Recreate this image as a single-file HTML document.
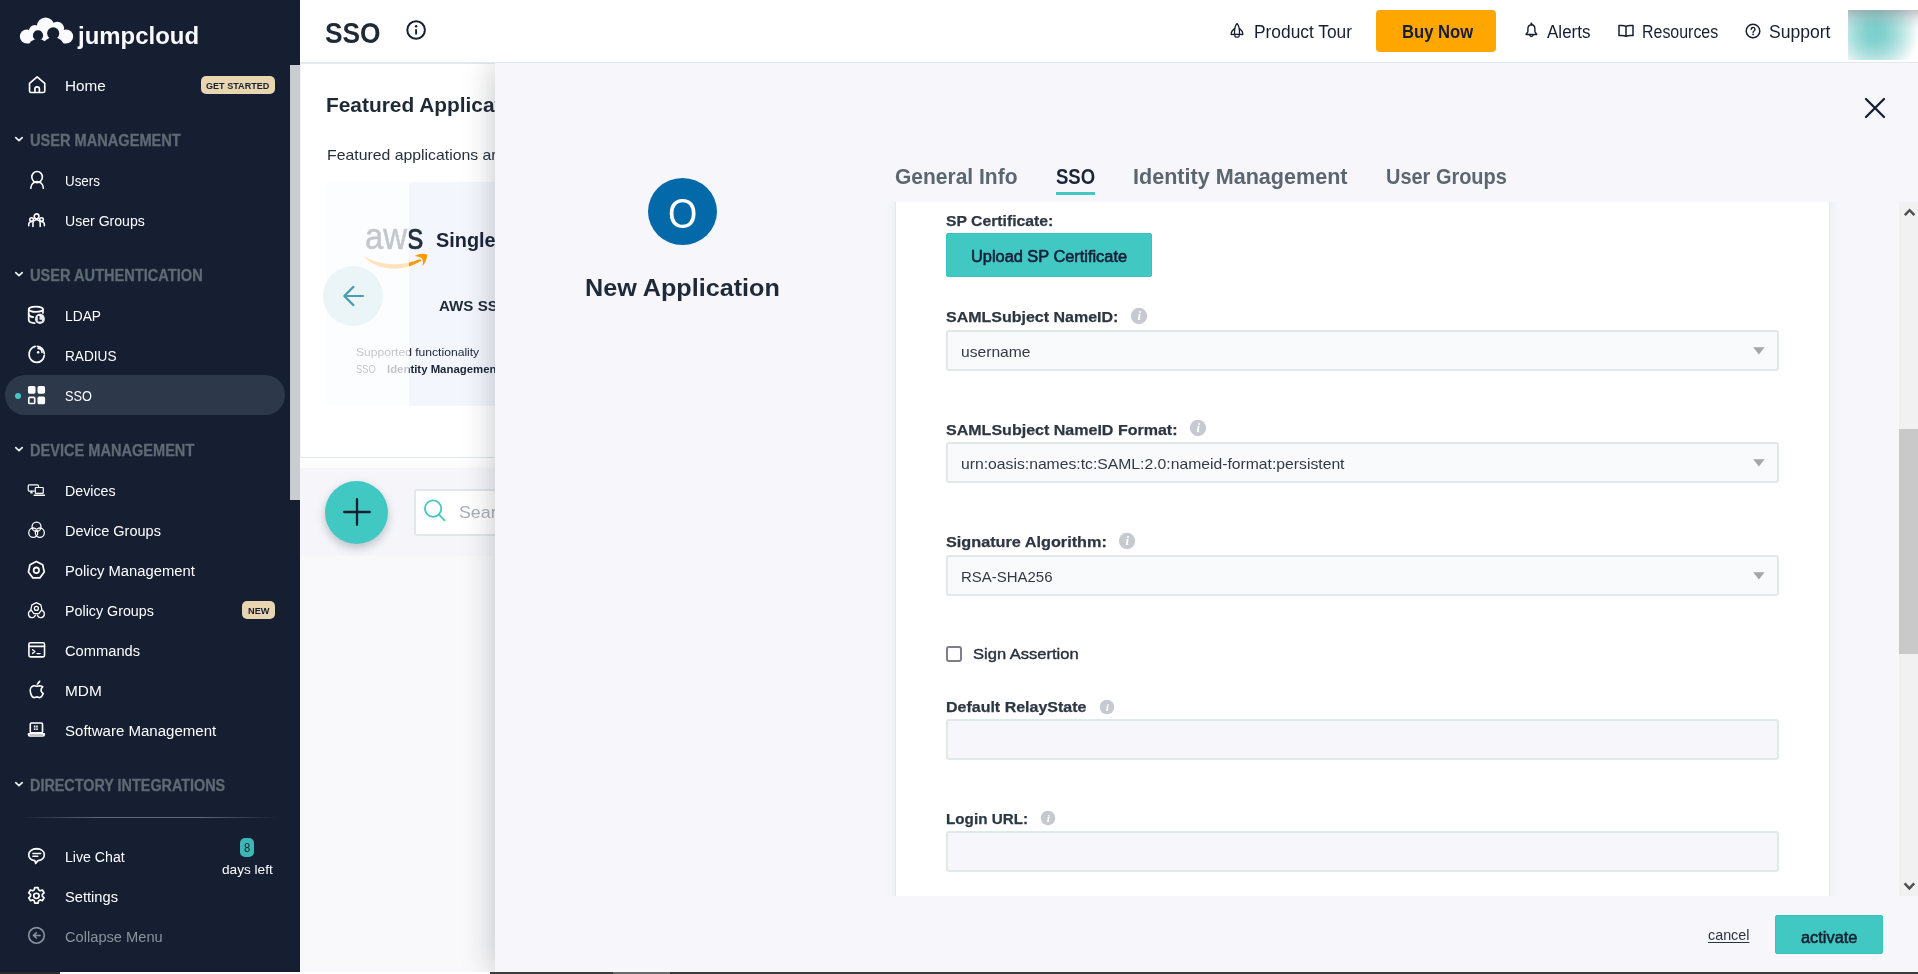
<!DOCTYPE html>
<html><head><meta charset="utf-8"><title>SSO - JumpCloud</title>
<style>
html,body{margin:0;padding:0;}
body{width:1918px;height:974px;overflow:hidden;position:relative;background:#f9f9fb;font-family:"Liberation Sans",sans-serif;}
#root{position:absolute;left:0;top:0;width:1918px;height:974px;will-change:transform;}
.b{position:absolute;display:block;}
.t{position:absolute;white-space:nowrap;display:block;transform-origin:0 0;}
</style></head><body><div id="root">
<div class="b" style="left:0px;top:0px;width:300px;height:972px;background:#161e32;"></div>
<div class="b" style="left:290px;top:65px;width:10px;height:435px;background:#c9cdd0;"></div>
<svg class="b" style="left:14px;top:12px" width="70" height="38" viewBox="14 12 70 38">
<g fill="#fafbfd">
<circle cx="26.9" cy="36.6" r="7.05"/><circle cx="66.1" cy="36.6" r="7.05"/>
<circle cx="45.6" cy="26.1" r="8.7"/><circle cx="34.9" cy="30.9" r="6"/><circle cx="57.3" cy="28.5" r="6.8"/>
<rect x="27" y="30" width="39" height="13.6"/>
</g>
<g fill="#161e32">
<circle cx="38" cy="35.4" r="5.1"/><circle cx="53.2" cy="33.2" r="6.05"/>
<ellipse cx="38" cy="47" rx="9.5" ry="8"/><ellipse cx="53.4" cy="46.500" rx="10.600" ry="9.200"/>
<rect x="14" y="43.65" width="70" height="7"/>
</g>
</svg>
<span class="t" style="left:78.38px;top:19.60px;font-size:24px;line-height:31px;font-weight:700;color:#fafbfd;transform:scaleX(0.9975);">jumpcloud</span>
<div class="b" style="left:5px;top:375px;width:280px;height:40px;background:#2d384b;border-radius:20px;"></div>
<div class="b" style="left:15px;top:393px;width:6px;height:6px;background:#41c8c3;border-radius:50%;"></div>
<span class="t" style="left:65.10px;top:75.50px;font-size:15.5px;line-height:20px;font-weight:400;color:#fff;transform:scaleX(0.9859);">Home</span>
<span class="t" style="left:29.90px;top:130.00px;font-size:16.0px;line-height:21px;font-weight:700;color:#5e6a74;transform:scaleX(0.9119);-webkit-text-stroke:0.300px #5e6a74;">USER MANAGEMENT</span><svg class="b" style="left:14px;top:134px" width="10" height="10" viewBox="0 0 10 10"><path d="M1.8 3.6 L5 6.6 L8.2 3.6" fill="none" stroke="#e8ecf0" stroke-width="1.8" stroke-linecap="round" stroke-linejoin="round"/></svg>
<span class="t" style="left:65.10px;top:170.50px;font-size:15.5px;line-height:20px;font-weight:400;color:#fff;transform:scaleX(0.8627);">Users</span>
<span class="t" style="left:65.10px;top:210.50px;font-size:15.5px;line-height:20px;font-weight:400;color:#fff;transform:scaleX(0.9080);">User Groups</span>
<span class="t" style="left:29.90px;top:265.00px;font-size:16.0px;line-height:21px;font-weight:700;color:#5e6a74;transform:scaleX(0.9120);-webkit-text-stroke:0.300px #5e6a74;">USER AUTHENTICATION</span><svg class="b" style="left:14px;top:269px" width="10" height="10" viewBox="0 0 10 10"><path d="M1.8 3.6 L5 6.6 L8.2 3.6" fill="none" stroke="#e8ecf0" stroke-width="1.8" stroke-linecap="round" stroke-linejoin="round"/></svg>
<span class="t" style="left:65.10px;top:305.50px;font-size:15.5px;line-height:20px;font-weight:400;color:#fff;transform:scaleX(0.8899);">LDAP</span>
<span class="t" style="left:65.10px;top:345.50px;font-size:15.5px;line-height:20px;font-weight:400;color:#fff;transform:scaleX(0.8807);">RADIUS</span>
<span class="t" style="left:65.10px;top:385.50px;font-size:15.5px;line-height:20px;font-weight:400;color:#fff;transform:scaleX(0.8225);">SSO</span>
<span class="t" style="left:29.90px;top:440.00px;font-size:16.0px;line-height:21px;font-weight:700;color:#5e6a74;transform:scaleX(0.9104);-webkit-text-stroke:0.300px #5e6a74;">DEVICE MANAGEMENT</span><svg class="b" style="left:14px;top:444px" width="10" height="10" viewBox="0 0 10 10"><path d="M1.8 3.6 L5 6.6 L8.2 3.6" fill="none" stroke="#e8ecf0" stroke-width="1.8" stroke-linecap="round" stroke-linejoin="round"/></svg>
<span class="t" style="left:65.10px;top:480.50px;font-size:15.5px;line-height:20px;font-weight:400;color:#fff;transform:scaleX(0.9183);">Devices</span>
<span class="t" style="left:65.10px;top:520.50px;font-size:15.5px;line-height:20px;font-weight:400;color:#fff;transform:scaleX(0.9353);">Device Groups</span>
<span class="t" style="left:65.10px;top:560.50px;font-size:15.5px;line-height:20px;font-weight:400;color:#fff;transform:scaleX(0.9532);">Policy Management</span>
<span class="t" style="left:65.10px;top:600.50px;font-size:15.5px;line-height:20px;font-weight:400;color:#fff;transform:scaleX(0.9214);">Policy Groups</span>
<span class="t" style="left:65.10px;top:640.50px;font-size:15.5px;line-height:20px;font-weight:400;color:#fff;transform:scaleX(0.9472);">Commands</span>
<span class="t" style="left:65.10px;top:680.50px;font-size:15.5px;line-height:20px;font-weight:400;color:#fff;transform:scaleX(0.9934);">MDM</span>
<span class="t" style="left:65.10px;top:720.50px;font-size:15.5px;line-height:20px;font-weight:400;color:#fff;transform:scaleX(0.9697);">Software Management</span>
<span class="t" style="left:29.90px;top:775.00px;font-size:16.0px;line-height:21px;font-weight:700;color:#5e6a74;transform:scaleX(0.8987);-webkit-text-stroke:0.300px #5e6a74;">DIRECTORY INTEGRATIONS</span><svg class="b" style="left:14px;top:779px" width="10" height="10" viewBox="0 0 10 10"><path d="M1.8 3.6 L5 6.6 L8.2 3.6" fill="none" stroke="#e8ecf0" stroke-width="1.8" stroke-linecap="round" stroke-linejoin="round"/></svg>
<div class="b" style="left:20px;top:817px;width:259px;height:1px;background:linear-gradient(90deg,rgba(120,130,145,0),rgba(120,130,145,.75) 30%,rgba(120,130,145,.75) 70%,rgba(120,130,145,0));"></div>
<span class="t" style="left:65.10px;top:846.50px;font-size:15.5px;line-height:20px;font-weight:400;color:#fff;transform:scaleX(0.9116);">Live Chat</span>
<span class="t" style="left:65.10px;top:886.50px;font-size:15.5px;line-height:20px;font-weight:400;color:#fff;transform:scaleX(0.9459);">Settings</span>
<span class="t" style="left:65.10px;top:926.50px;font-size:15.5px;line-height:20px;font-weight:400;color:#8a929c;transform:scaleX(0.9450);">Collapse Menu</span>
<div class="b" style="left:201px;top:76px;width:74px;height:18px;background:#e8d6b0;border-radius:5px;"></div>
<span class="t" style="left:206.30px;top:80.30px;font-size:9.5px;line-height:12px;font-weight:700;color:#161e32;transform:scaleX(0.9546);">GET STARTED</span>
<div class="b" style="left:242px;top:601px;width:33px;height:18px;background:#e8d6b0;border-radius:5px;"></div>
<span class="t" style="left:247.80px;top:605.30px;font-size:9.5px;line-height:12px;font-weight:700;color:#161e32;transform:scaleX(0.9692);">NEW</span>
<div class="b" style="left:240px;top:838px;width:14px;height:19px;background:#3cb8b4;border-radius:5px;"></div>
<span class="t" style="left:244.00px;top:840.30px;font-size:12.0px;line-height:16px;font-weight:400;color:#161e32;transform:scaleX(0.9309);">8</span>
<span class="t" style="left:221.80px;top:860.90px;font-size:13.0px;line-height:17px;font-weight:400;color:#fff;transform:scaleX(1.0490);">days left</span>
<svg class="b" style="left:22px;top:71px" width="28" height="28" viewBox="-4 -4 28 28" fill="none" stroke="#fff" stroke-width="1.65" stroke-linecap="round" stroke-linejoin="round"><g transform="matrix(1.0155 0 0 0.9782 0.489 -0.065)"><path d="M3 8.6 L10.5 2 L18 8.6 V16.4 a1.6 1.6 0 0 1 -1.6 1.6 H4.6 a1.6 1.6 0 0 1 -1.6 -1.6 Z"/><path d="M8.3 17.8 v-3.4 a2.2 2.2 0 0 1 4.4 0 v3.4"/></g></svg>
<svg class="b" style="left:22px;top:166px" width="28" height="28" viewBox="-4 -4 28 28" fill="none" stroke="#fff" stroke-width="1.65" stroke-linecap="round" stroke-linejoin="round"><g transform="matrix(0.9775 0 0 1.0257 0.736 -0.326)"><circle cx="10.6" cy="7.2" r="5.4"/><path d="M4.2 18 a6.4 6.4 0 0 1 12.8 0"/></g></svg>
<svg class="b" style="left:22px;top:206px" width="28" height="28" viewBox="-4 -4 28 28" fill="none" stroke="#fff" stroke-width="1.65" stroke-linecap="round" stroke-linejoin="round"><g transform="matrix(0.9525 0 0 0.9712 0.657 0.087)"><circle cx="10.4" cy="6.4" r="2.5"/><path d="M6.6 16.8 v-3 a3.8 3.8 0 0 1 7.6 0 v3"/><circle cx="5.2" cy="9.8" r="1.9"/><path d="M2.2 16.2 v-1.6 a3 3 0 0 1 3.6 -2.9"/><circle cx="15.6" cy="9.8" r="1.9"/><path d="M18.6 16.2 v-1.6 a3 3 0 0 0 -3.6 -2.9"/></g></svg>
<svg class="b" style="left:22px;top:301px" width="28" height="28" viewBox="-4 -4 28 28" fill="none" stroke="#fff" stroke-width="1.7" stroke-linecap="round" stroke-linejoin="round"><g transform="matrix(1.0041 0 0 1.0382 -0.108 -0.238)"><ellipse cx="9.9" cy="4.3" rx="7.1" ry="2.6"/><path d="M2.8 4.3 V14.5 c0 1.700 2.600 3 6 3.200"/><path d="M17 4.300 V8"/><path d="M2.800 9.400 c0.300 1.300 2 2.200 4.600 2.600"/><circle cx="14" cy="13.600" r="4.900" fill="#eceef1" stroke="none"/><path d="M12.700 10.800 V15.200 H15.900" stroke="#161e32" stroke-width="1.700" stroke-linecap="butt" stroke-linejoin="miter"/></g></svg>
<svg class="b" style="left:22px;top:341px" width="28" height="28" viewBox="-4 -4 28 28" fill="none" stroke="#fff" stroke-width="1.7" stroke-linecap="round" stroke-linejoin="round"><g transform="matrix(0.9949 0 0 1.0518 0.210 -1.078)"><path d="M9 2.350 A7.700 7.700 0 1 0 18.200 10.900"/><path d="M11.300 2.250 A7.700 7.700 0 0 1 18.200 9.100"/><path d="M12 4.100 A3.900 3.900 0 0 1 15.900 8"/><circle cx="12" cy="8" r="1.250" fill="#fff" stroke="none"/></g></svg>
<svg class="b" style="left:22px;top:381px" width="28" height="28" viewBox="-4 -4 28 28" fill="none" stroke="#fff" stroke-width="1.65" stroke-linecap="round" stroke-linejoin="round"><g transform="matrix(1.0251 0 0 1.0471 0.312 0.153)"><rect x="1.6" y="0.8" width="7.4" height="7.4" rx="1.6" fill="#fff" stroke="none"/><rect x="10.9" y="0.8" width="7.4" height="7.4" rx="1.6" fill="#fff" stroke="none"/><rect x="10.9" y="10.9" width="7.4" height="7.4" rx="1.6" fill="#fff" stroke="none"/><rect x="2.4" y="11.7" width="5.8" height="5.8" rx="1" stroke-width="1.6"/></g></svg>
<svg class="b" style="left:22px;top:476px" width="28" height="28" viewBox="-4 -4 28 28" fill="none" stroke="#fff" stroke-width="1.65" stroke-linecap="round" stroke-linejoin="round"><g transform="matrix(0.9898 0 0 0.9950 -0.180 0.520)"><path d="M8.6 10.6 H3.4 a1 1 0 0 1 -1 -1 V5.4 a1 1 0 0 1 1 -1 h8.4 a1 1 0 0 1 1 1 v0.8" stroke-width="1.2"/><path d="M5.6 10.8 l-0.6 1.6 h1.6" stroke-width="1.2"/><rect x="9.6" y="7" width="8" height="6" rx="0.6" stroke-width="1.2"/><path d="M8.4 14.8 h10.4" stroke-width="1.4"/></g></svg>
<svg class="b" style="left:22px;top:516px" width="28" height="28" viewBox="-4 -4 28 28" fill="none" stroke="#fff" stroke-width="1.65" stroke-linecap="round" stroke-linejoin="round"><g transform="matrix(0.9755 0 0 1.0081 0.584 -0.048)"><circle cx="10.2" cy="6.8" r="4.6" stroke-width="1.3"/><circle cx="6.8" cy="12.6" r="4.6" stroke-width="1.3"/><circle cx="13.6" cy="12.6" r="4.6" stroke-width="1.3"/></g></svg>
<svg class="b" style="left:22px;top:556px" width="28" height="28" viewBox="-4 -4 28 28" fill="none" stroke="#fff" stroke-width="1.65" stroke-linecap="round" stroke-linejoin="round"><g transform="matrix(1.0417 0 0 1.1000 -0.283 -0.200)"><path d="M10.2 1.6 L16.3 4.5 L17.8 11.1 L13.6 16.4 H6.8 L2.6 11.1 L4.1 4.5 Z" stroke-width="1.6"/><circle cx="10.2" cy="9.6" r="2.6" stroke-width="1.6"/></g></svg>
<svg class="b" style="left:22px;top:596px" width="28" height="28" viewBox="-4 -4 28 28" fill="none" stroke="#fff" stroke-width="1.65" stroke-linecap="round" stroke-linejoin="round"><g transform="matrix(0.9901 0 0 1.0089 0.283 0.758)"><path d="M10.2 1.8 L14.7 4 L15.8 8.8 L12.7 12.7 H7.7 L4.6 8.8 L5.7 4 Z" stroke-width="1.3"/><circle cx="10.2" cy="7.6" r="2" stroke-width="1.3"/><path d="M5 9.6 a3.6 3.6 0 1 0 4.2 4.6" stroke-width="1.3"/><path d="M15.4 9.6 a3.6 3.6 0 1 1 -4.2 4.6" stroke-width="1.3"/></g></svg>
<svg class="b" style="left:22px;top:636px" width="28" height="28" viewBox="-4 -4 28 28" fill="none" stroke="#fff" stroke-width="1.65" stroke-linecap="round" stroke-linejoin="round"><g transform="matrix(0.9639 0 0 0.9750 0.786 0.150)"><rect x="2.2" y="2.6" width="16.2" height="14.6" rx="1.6"/><path d="M2.4 6.4 h15.8"/><path d="M6 9.8 l2.4 1.9 l-2.4 1.9" stroke-width="1.4"/><path d="M10.6 13.8 h3.2" stroke-width="1.4"/></g></svg>
<svg class="b" style="left:22px;top:676px" width="28" height="28" viewBox="-4 -4 28 28" fill="none" stroke="#fff" stroke-width="1.65" stroke-linecap="round" stroke-linejoin="round"><g transform="matrix(1.1253 0 0 1.1468 -1.001 -1.572)"><path d="M13.6 6.6 c-1.2 -0.5 -2.2 0.3 -3 0.3 c-0.8 0 -1.8 -0.8 -3.2 -0.4 c-2.2 0.6 -3.2 3 -2.6 5.6 c0.5 2.2 1.9 4.6 3.4 4.6 c0.9 0 1.4 -0.6 2.4 -0.6 c1 0 1.4 0.6 2.4 0.6 c1.4 0 2.6 -2 3.2 -3.6 c-1.6 -0.8 -2.2 -2.4 -1.8 -3.8 c0.2 -0.9 0.8 -1.6 1.4 -2 c-0.6 -0.5 -1.4 -0.9 -2.2 -0.7 Z" stroke-width="1.4"/><path d="M10.8 5.2 c0.2 -1.6 1.2 -2.8 2.6 -3.2 c0 1.6 -1 2.8 -2.6 3.2 Z" fill="#fff" stroke-width="0.6"/></g></svg>
<svg class="b" style="left:22px;top:716px" width="28" height="28" viewBox="-4 -4 28 28" fill="none" stroke="#fff" stroke-width="1.65" stroke-linecap="round" stroke-linejoin="round"><g transform="matrix(0.9873 0 0 1.0286 -0.075 0.143)"><rect x="4.4" y="2.8" width="12.4" height="9.6" rx="1.2"/><path d="M2.6 13.4 h16 v0.6 a1.4 1.4 0 0 1 -1.4 1.4 H4 a1.4 1.4 0 0 1 -1.4 -1.4 Z"/><rect x="8" y="5.2" width="1.6" height="2" fill="#fff" stroke="none"/><rect x="10.4" y="5.2" width="1.6" height="2" fill="#fff" stroke="none"/><rect x="8" y="8" width="1.6" height="1.6" fill="#fff" stroke="none"/><rect x="10.4" y="8" width="1.6" height="1.6" fill="#fff" stroke="none"/></g></svg>
<svg class="b" style="left:22px;top:842px" width="28" height="28" viewBox="-4 -4 28 28" fill="none" stroke="#fff" stroke-width="1.65" stroke-linecap="round" stroke-linejoin="round"><g transform="matrix(0.9871 0 0 1.0878 0.344 -0.492)"><path d="M10.4 3 c4.6 0 7.8 2.2 7.8 5.4 c0 3 -2.8 5 -6.4 5.4 l-2.4 2.6 l-0.8 -2.6 c-3.4 -0.4 -6.2 -2.4 -6.2 -5.4 c0 -3.200 3.400 -5.400 8 -5.400 Z"/><path d="M6.600 7.400 h8" stroke-width="1.4"/><path d="M6.600 9.800 h5" stroke-width="1.4"/></g></svg>
<svg class="b" style="left:22px;top:882px" width="28" height="28" viewBox="-4 -4 28 28" fill="none" stroke="#fff" stroke-width="1.65" stroke-linecap="round" stroke-linejoin="round"><g transform="matrix(1.0386 0 0 1.0107 -0.177 -0.757)"><path d="M8.600 1.800 h3.200 l0.500 2.300 l1.500 0.900 l2.200 -0.800 l1.600 2.800 l-1.700 1.600 v1.800 l1.700 1.600 l-1.600 2.800 l-2.200 -0.800 l-1.500 0.900 l-0.500 2.300 h-3.200 l-0.500 -2.300 l-1.500 -0.900 l-2.200 0.800 l-1.600 -2.800 l1.700 -1.600 v-1.800 l-1.700 -1.600 l1.600 -2.800 l2.200 0.800 l1.500 -0.900 Z" transform="translate(0,0.500)"/><circle cx="10.200" cy="10.500" r="2.600"/></g></svg>
<svg class="b" style="left:22px;top:922px" width="28" height="28" viewBox="-4 -4 28 28" fill="none" stroke="#8a929c" stroke-width="1.65" stroke-linecap="round" stroke-linejoin="round"><g transform="matrix(0.9975 0 0 0.9964 0.305 -0.724)"><circle cx="10.200" cy="10.200" r="7.800"/><path d="M13.800 10.200 h-6.400 M10 7.600 l-2.800 2.600 l2.800 2.600" stroke-width="1.600"/></g></svg>
<div class="b" style="left:300px;top:0px;width:1618px;height:972px;background:#f9f9fb;"></div>
<div class="b" style="left:300px;top:63px;width:1618px;height:394px;background:#fff;border-bottom:1px solid #dfe7e8;border-left:1px solid #eef2f2;border-bottom-left-radius:3px;box-sizing:content-box;"></div>
<div class="b" style="left:300px;top:458px;width:1618px;height:10px;background:linear-gradient(#fff,#fbfbfd);"></div>
<div class="b" style="left:300px;top:468px;width:1618px;height:88px;background:#f6f6fa;"></div>
<span class="t" style="left:326.40px;top:90.60px;font-size:21px;line-height:27px;font-weight:700;color:#1f2a37;transform:scaleX(0.9938);">Featured Applications</span>
<div class="b" style="left:300px;top:63px;width:195px;height:1px;background:#e6ebed;"></div>
<span class="t" style="left:326.60px;top:145.30px;font-size:15.0px;line-height:20px;font-weight:400;color:#26313e;transform:scaleX(1.0539);">Featured applications are</span>
<div class="b" style="left:326px;top:182px;width:700px;height:224px;background:#f3f6fd;"></div>
<span class="t" style="left:365.20px;top:213.30px;font-size:36px;line-height:47px;font-weight:400;color:#232f3e;transform:scaleX(0.9145);-webkit-text-stroke:0.500px #232f3e;">aws</span>
<svg class="b" style="left:355px;top:250px" width="80" height="22" viewBox="355 250 80 22"><path d="M362.500 255.300 C372 261.400 383 264.300 394 264.300 C403 264.300 412 262.400 420.200 258.900 L421.400 260.700 C413 265.600 404 268.800 393.500 268.800 C381 268.800 370 263.500 362.500 255.300 Z" fill="#ff9900"/><path d="M414.600 256 Q421 252.600 427.300 254.500 Q426.800 261 422.400 266.200 Q423.800 261 421.800 258.200 Q419 256.300 414.600 256 Z" fill="#ff9900"/></svg>
<span class="t" style="left:436.00px;top:226.80px;font-size:20.0px;line-height:26px;font-weight:700;color:#1b2438;transform:scaleX(0.9944);">Single Sign-On</span>
<span class="t" style="left:439.40px;top:295.50px;font-size:15.0px;line-height:20px;font-weight:700;color:#1f2a37;transform:scaleX(1.0079);">AWS SSO</span>
<span class="t" style="left:355.80px;top:345.00px;font-size:11.0px;line-height:14px;font-weight:400;color:#1b2438;transform:scaleX(1.1007);">Supported functionality</span>
<span class="t" style="left:355.80px;top:362.00px;font-size:11.0px;line-height:14px;font-weight:400;color:#1b2438;transform:scaleX(0.8488);">SSO</span>
<span class="t" style="left:387.30px;top:362.00px;font-size:11.0px;line-height:14px;font-weight:700;color:#1b2438;transform:scaleX(1.0348);">Identity Management</span>
<div class="b" style="left:326px;top:182px;width:83px;height:224px;background:rgba(255,255,255,.73);"></div>
<div class="b" style="left:323px;top:266px;width:60px;height:60px;background:#ebf5f8;border-radius:50%;"></div>
<svg class="b" style="left:341px;top:284px" width="24" height="24" viewBox="0 0 24 24" fill="none" stroke="#4b9db3" stroke-width="2.200" stroke-linecap="round" stroke-linejoin="round"><path d="M22 12 H4 M12.400 2.900 L3.300 12 L12.400 21.100"/></svg>
<div class="b" style="left:325px;top:480.5px;width:63px;height:63px;background:#41c8c3;border-radius:50%;box-shadow:0 4px 10px rgba(40,50,70,.28);"></div>
<svg class="b" style="left:341.500px;top:497px" width="30" height="30" viewBox="0 0 30 30" fill="none" stroke="#161e32" stroke-width="2.300" stroke-linecap="round"><path d="M2.200 15 H27.800 M15 2.200 V27.800"/></svg>
<div class="b" style="left:413.5px;top:488.5px;width:600px;height:47px;background:#fff;border:2px solid #e0e8e8;border-radius:3px;box-sizing:border-box;"></div>
<svg class="b" style="left:422px;top:498px" width="26" height="26" viewBox="0 0 26 26" fill="none" stroke="#41c8c3" stroke-width="1.800" stroke-linecap="round"><circle cx="11.100" cy="10.600" r="8.200"/><path d="M17.200 16.800 L22.600 22.400"/></svg>
<span class="t" style="left:458.60px;top:502.30px;font-size:17.0px;line-height:22px;font-weight:400;color:#a9b0b9;transform:scaleX(1.0466);">Search</span>
<div class="b" style="left:495px;top:63px;width:1423px;height:909px;background:#f6f6fb;box-shadow:0 0 30px rgba(30,35,45,.27);"></div>
<svg class="b" style="left:1863px;top:96px" width="24" height="24" viewBox="0 0 24 24" fill="none" stroke="#161e32" stroke-width="2.300" stroke-linecap="round"><path d="M3 3 L21 21 M21 3 L3 21"/></svg>
<div class="b" style="left:648px;top:177.7px;width:69px;height:67px;background:#0469a9;border-radius:50%;"></div>
<span class="t" style="left:668.20px;top:185.70px;font-size:42px;line-height:55px;font-weight:400;color:#fff;transform:scaleX(0.8974);">O</span>
<span class="t" style="left:585.40px;top:271.80px;font-size:24.0px;line-height:31px;font-weight:700;color:#1f2a38;transform:scaleX(1.0487);">New Application</span>
<span class="t" style="left:894.70px;top:162.20px;font-size:22.0px;line-height:29px;font-weight:700;color:#5b6670;transform:scaleX(0.9543);">General Info</span>
<span class="t" style="left:1055.80px;top:162.20px;font-size:22.0px;line-height:29px;font-weight:700;color:#1b2438;transform:scaleX(0.8423);">SSO</span>
<div class="b" style="left:1055.5px;top:191.5px;width:39.5px;height:3.5px;background:#41c8c3;"></div>
<span class="t" style="left:1133.40px;top:162.20px;font-size:22.0px;line-height:29px;font-weight:700;color:#5b6670;transform:scaleX(0.9804);">Identity Management</span>
<span class="t" style="left:1386.20px;top:162.20px;font-size:22.0px;line-height:29px;font-weight:700;color:#5b6670;transform:scaleX(0.9068);">User Groups</span>
<div class="b" style="left:885px;top:201.5px;width:11px;height:694.5px;background:linear-gradient(90deg,#f6f6fb 0%,#f3f4f8 55%,#eeeff3 100%);"></div>
<div class="b" style="left:1829px;top:201.5px;width:11px;height:694.5px;background:linear-gradient(270deg,#f6f6fb 0%,#f3f4f8 55%,#eff0f4 100%);"></div>
<div class="b" style="left:895px;top:201.5px;width:935px;height:694.5px;background:#fff;border-left:1px solid #e3e9ea;border-right:1px solid #e3e9ea;box-sizing:border-box;"></div>
<div class="b" style="left:1899px;top:201.5px;width:19px;height:694.5px;background:#f1f1f1;"></div>
<div class="b" style="left:1899px;top:429px;width:19px;height:225px;background:#c9c9c9;"></div>
<svg class="b" style="left:1899px;top:202px" width="19" height="19" viewBox="1899 202 19 19" fill="none" stroke="#505050" stroke-width="2.500" stroke-linejoin="miter"><path d="M1904.800 215.200 L1909.600 210.200 L1914.400 215.200"/></svg>
<svg class="b" style="left:1899px;top:876px" width="19" height="19" viewBox="1899 876 19 19" fill="none" stroke="#505050" stroke-width="2.500" stroke-linejoin="miter"><path d="M1904.600 883.400 L1909.400 888.400 L1914.200 883.400"/></svg>
<span class="t" style="left:946.20px;top:210.50px;font-size:15.5px;line-height:20px;font-weight:700;color:#2d3743;transform:scaleX(1.0160);-webkit-text-stroke:0.250px #2d3743;">SP Certificate:</span>
<div class="b" style="left:946px;top:233px;width:206px;height:44px;background:#41c8c3;border-radius:2px;border:1px solid #36c4be;box-sizing:border-box;"></div>
<span class="t" style="left:971.00px;top:246.40px;font-size:16px;line-height:21px;font-weight:400;color:#17203a;transform:scaleX(1.0220);-webkit-text-stroke:0.600px #17203a;">Upload SP Certificate</span>
<span class="t" style="left:946.20px;top:307.20px;font-size:15.5px;line-height:20px;font-weight:700;color:#2d3743;transform:scaleX(1.0318);-webkit-text-stroke:0.250px #2d3743;">SAMLSubject NameID:</span>
<svg class="b" style="left:1128.6px;top:306.1px" width="20" height="20" viewBox="-10 -10 20 20"><circle cx="0" cy="0" r="8.15" fill="#c6cad0"/><text x="0.31" y="4.38" text-anchor="middle" font-family="Liberation Serif,serif" font-style="italic" font-weight="700" font-size="12.73" fill="#fff">i</text></svg>
<div class="b" style="left:946px;top:330px;width:833px;height:40.5px;background:#f9fafc;border:2px solid #e1e8e8;border-radius:3px;box-sizing:border-box;"></div><svg class="b" style="left:1753px;top:347.2px" width="12" height="8" viewBox="0 0 12 8"><path d="M0.200 0.300 H11.600 L5.900 7.600 Z" fill="#a8a5a5"/></svg>
<span class="t" style="left:961.00px;top:341.70px;font-size:15.0px;line-height:20px;font-weight:400;color:#333a44;transform:scaleX(1.0424);">username</span>
<span class="t" style="left:946.20px;top:419.80px;font-size:15.5px;line-height:20px;font-weight:700;color:#2d3743;transform:scaleX(1.0340);-webkit-text-stroke:0.250px #2d3743;">SAMLSubject NameID Format:</span>
<svg class="b" style="left:1188px;top:418px" width="20" height="20" viewBox="-10 -10 20 20"><circle cx="0" cy="0" r="8.15" fill="#c6cad0"/><text x="0.31" y="4.38" text-anchor="middle" font-family="Liberation Serif,serif" font-style="italic" font-weight="700" font-size="12.73" fill="#fff">i</text></svg>
<div class="b" style="left:946px;top:442px;width:833px;height:41px;background:#f9fafc;border:2px solid #e1e8e8;border-radius:3px;box-sizing:border-box;"></div><svg class="b" style="left:1753px;top:459.2px" width="12" height="8" viewBox="0 0 12 8"><path d="M0.200 0.300 H11.600 L5.900 7.600 Z" fill="#a8a5a5"/></svg>
<span class="t" style="left:961.00px;top:453.90px;font-size:15.0px;line-height:20px;font-weight:400;color:#333a44;transform:scaleX(1.0478);">urn:oasis:names:tc:SAML:2.0:nameid-format:persistent</span>
<span class="t" style="left:946.20px;top:532.30px;font-size:15.5px;line-height:20px;font-weight:700;color:#2d3743;transform:scaleX(1.0474);-webkit-text-stroke:0.250px #2d3743;">Signature Algorithm:</span>
<svg class="b" style="left:1117.2px;top:531.1px" width="20" height="20" viewBox="-10 -10 20 20"><circle cx="0" cy="0" r="8.15" fill="#c6cad0"/><text x="0.31" y="4.38" text-anchor="middle" font-family="Liberation Serif,serif" font-style="italic" font-weight="700" font-size="12.73" fill="#fff">i</text></svg>
<div class="b" style="left:946px;top:555px;width:833px;height:41px;background:#f9fafc;border:2px solid #e1e8e8;border-radius:3px;box-sizing:border-box;"></div><svg class="b" style="left:1753px;top:572.2px" width="12" height="8" viewBox="0 0 12 8"><path d="M0.200 0.300 H11.600 L5.900 7.600 Z" fill="#a8a5a5"/></svg>
<span class="t" style="left:961.00px;top:566.70px;font-size:15.0px;line-height:20px;font-weight:400;color:#333a44;transform:scaleX(0.9975);">RSA-SHA256</span>
<div class="b" style="left:946.3px;top:646px;width:16px;height:16px;background:#fff;border:2px solid #7d7d8c;border-radius:3px;box-sizing:border-box;"></div>
<span class="t" style="left:972.80px;top:644.30px;font-size:15.5px;line-height:20px;font-weight:400;color:#27313e;transform:scaleX(1.0664);-webkit-text-stroke:0.400px #27313e;">Sign Assertion</span>
<span class="t" style="left:946.20px;top:697.10px;font-size:15.5px;line-height:20px;font-weight:700;color:#2d3743;transform:scaleX(1.0317);-webkit-text-stroke:0.250px #2d3743;">Default RelayState</span>
<svg class="b" style="left:1096.5px;top:697px" width="20" height="20" viewBox="-10 -10 20 20"><circle cx="0" cy="0" r="7.25" fill="#c6cad0"/><text x="0.27" y="3.90" text-anchor="middle" font-family="Liberation Serif,serif" font-style="italic" font-weight="700" font-size="11.33" fill="#fff">i</text></svg>
<div class="b" style="left:946px;top:719px;width:833px;height:40.5px;background:#f6f6fb;border:2px solid #e1e8e8;border-radius:3px;box-sizing:border-box;"></div>
<span class="t" style="left:946.20px;top:808.90px;font-size:15.5px;line-height:20px;font-weight:700;color:#2d3743;transform:scaleX(0.9824);-webkit-text-stroke:0.250px #2d3743;">Login URL:</span>
<svg class="b" style="left:1037.6px;top:808.2px" width="20" height="20" viewBox="-10 -10 20 20"><circle cx="0" cy="0" r="7.25" fill="#c6cad0"/><text x="0.27" y="3.90" text-anchor="middle" font-family="Liberation Serif,serif" font-style="italic" font-weight="700" font-size="11.33" fill="#fff">i</text></svg>
<div class="b" style="left:946px;top:831px;width:833px;height:40.5px;background:#f6f6fb;border:2px solid #e1e8e8;border-radius:3px;box-sizing:border-box;"></div>
<span class="t" style="left:1708.20px;top:924.80px;font-size:15.0px;line-height:20px;font-weight:400;color:#2b3541;transform:scaleX(0.9550);text-decoration:underline;text-underline-offset:2px;">cancel</span>
<div class="b" style="left:1775px;top:915px;width:108px;height:39px;background:#41c8c3;border-radius:2px;border:1px solid #36c4be;box-sizing:border-box;"></div>
<span class="t" style="left:1801.00px;top:926.60px;font-size:16.5px;line-height:21px;font-weight:400;color:#161e32;transform:scaleX(0.9922);-webkit-text-stroke:0.550px #161e32;">activate</span>
<div class="b" style="left:300px;top:0px;width:1618px;height:62px;background:#fff;border-bottom:1px solid #e1e7ea;"></div>
<span class="t" style="left:325.30px;top:13.10px;font-size:30px;line-height:39px;font-weight:700;color:#1f2a37;transform:scaleX(0.8768);">SSO</span>
<svg class="b" style="left:404px;top:18px" width="24" height="24" viewBox="0 0 24 24"><circle cx="12.100" cy="12" r="8.800" fill="none" stroke="#161e32" stroke-width="2"/><circle cx="12.100" cy="8.200" r="1.250" fill="#161e32"/><path d="M12.100 11.200 V16.500" stroke="#161e32" stroke-width="1.900" stroke-linecap="butt"/></svg>
<span class="t" style="left:1253.80px;top:20.50px;font-size:17.5px;line-height:23px;font-weight:400;color:#161e32;transform:scaleX(0.9912);">Product Tour</span>
<span class="t" style="left:1547.00px;top:20.50px;font-size:17.5px;line-height:23px;font-weight:400;color:#161e32;transform:scaleX(0.9729);">Alerts</span>
<span class="t" style="left:1641.50px;top:20.50px;font-size:17.5px;line-height:23px;font-weight:400;color:#161e32;transform:scaleX(0.9109);">Resources</span>
<span class="t" style="left:1768.60px;top:20.50px;font-size:17.5px;line-height:23px;font-weight:400;color:#161e32;transform:scaleX(1.0026);">Support</span>
<div class="b" style="left:1376px;top:10px;width:120px;height:42px;background:#ffa600;border-radius:4px;"></div>
<span class="t" style="left:1401.50px;top:20.50px;font-size:17.5px;line-height:23px;font-weight:700;color:#161e32;transform:scaleX(0.9493);">Buy Now</span>
<svg class="b" style="left:1229px;top:22px" width="16" height="18" viewBox="0 0 16 18" fill="none" stroke="#161e32" stroke-width="1.300" stroke-linecap="round" stroke-linejoin="round"><path d="M8 1.600 C5.800 3.600 5.400 7 5.500 12.300 H10.500 C10.600 7 10.200 3.600 8 1.600 Z"/><path d="M5.600 6.600 C3.300 8.200 2 10.200 2.200 12.500 L5.500 12.300"/><path d="M10.400 6.600 C12.700 8.200 14 10.200 13.800 12.500 L10.500 12.300"/><path d="M5.900 12.600 v1.500 a1 1 0 0 0 1 1 h2.200 a1 1 0 0 0 1 -1 v-1.500"/></svg>
<svg class="b" style="left:1523px;top:22px" width="16" height="18" viewBox="0 0 16 18" fill="none" stroke="#161e32" stroke-width="1.400" stroke-linecap="round" stroke-linejoin="round"><path d="M8.400 2.700 C5.800 2.700 4.900 4.700 4.900 6.900 V9.400 C4.900 10.700 3.100 11.200 3.100 12.500 H13.700 C13.700 11.200 11.900 10.700 11.900 9.400 V6.900 C11.900 4.700 11 2.700 8.400 2.700 Z"/><path d="M8.400 1.400 v1.200" stroke-width="1.800"/><path d="M6.600 12.900 a1.900 2.300 0 0 0 3.600 0"/></svg>
<svg class="b" style="left:1617px;top:23px" width="18" height="16" viewBox="0 0 18 16" fill="none" stroke="#161e32" stroke-width="1.500" stroke-linejoin="round"><path d="M9 3.400 C7 2.200 4.600 2.200 2 2.600 V12.600 C4.600 12.200 7 12.200 9 13.400 C11 12.200 13.400 12.200 16 12.600 V2.600 C13.400 2.200 11 2.200 9 3.400 Z M9 3.400 V13.400"/></svg>
<svg class="b" style="left:1744px;top:21.500px" width="18" height="18" viewBox="0 0 18 18"><circle cx="9" cy="9" r="6.800" fill="none" stroke="#161e32" stroke-width="1.500"/><path d="M7.200 7.400 a1.900 1.900 0 1 1 2.800 1.600 c-0.600 0.400 -0.900 0.700 -0.900 1.400" fill="none" stroke="#161e32" stroke-width="1.400" stroke-linecap="round"/><circle cx="9.100" cy="12.400" r="0.900" fill="#161e32"/></svg>
<div class="b" style="left:1848px;top:10px;width:70px;height:50px;background:linear-gradient(180deg,rgba(105,112,118,.42) 0%,rgba(110,118,124,.16) 18%,rgba(110,118,124,0) 38%),radial-gradient(ellipse 44px 44px at 27px 22.500px,#7bcfcc 0%,#83d2cf 22%,#a4dddb 48%,#cdebeb 72%,rgba(255,255,255,0) 100%),#fff;"></div>
<div class="b" style="left:0px;top:972px;width:60px;height:2px;background:#2b2b2b;"></div>
<div class="b" style="left:60px;top:972px;width:430px;height:2px;background:#fff;"></div>
<div class="b" style="left:490px;top:972px;width:1428px;height:2px;background:#3a3a3a;"></div>
<div class="b" style="left:613px;top:972px;width:57px;height:2px;background:#6a6a6a;"></div>
</div></body></html>
